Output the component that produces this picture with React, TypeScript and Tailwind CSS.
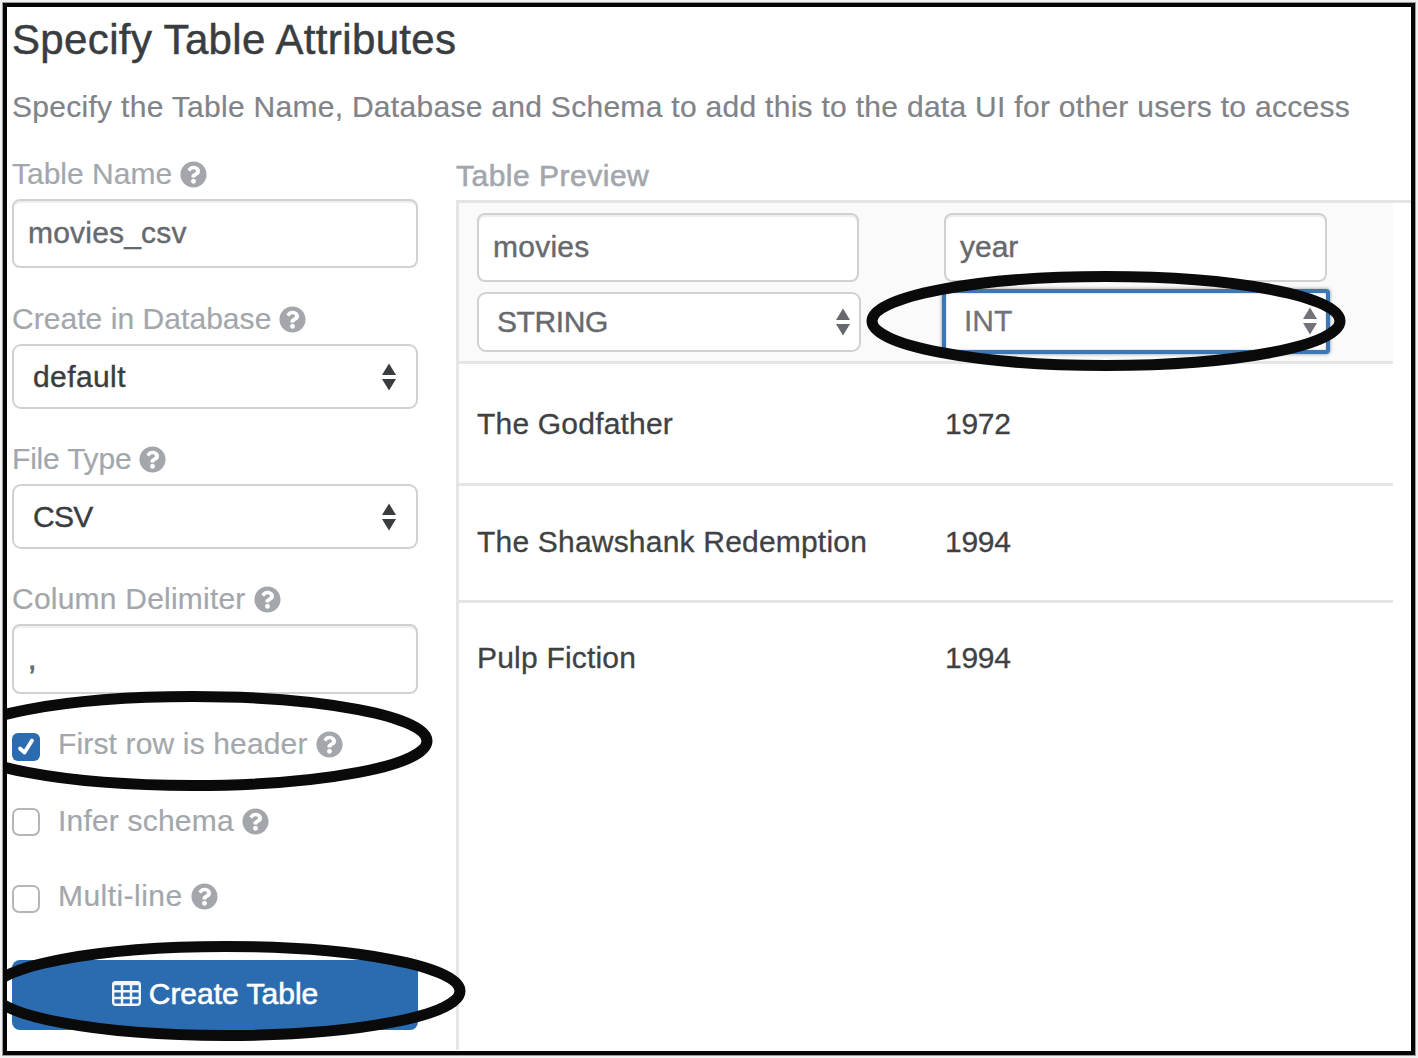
import React from "react";
import { FaQuestionCircle } from "react-icons/fa";

function Help() {
  return <FaQuestionCircle className="size-[27px] shrink-0 text-[#a3a7ac]" />;
}

function Label({ text, className = "" }: { text: string; className?: string }) {
  return (
    <div className={"flex items-center gap-[8px] whitespace-nowrap text-[30px] leading-[30px] text-[#a3a7ac] [-webkit-text-stroke:0.2px_#a3a7ac] " + className}>
      <span>{text}</span>
      <Help />
    </div>
  );
}

function Sorter() {
  return (
    <svg viewBox="0 0 14 28" className="h-[28px] w-[14px]" fill="currentColor">
      <path d="M7 0.5 L14 12 H0 Z M0 16 H14 L7 27.5 Z" />
    </svg>
  );
}

function Field({ value, className = "" }: { value: string; className?: string }) {
  return (
    <div className={"flex items-center rounded-[8px] border-2 border-[#cfd1d4] bg-white pl-[14px] text-[30px] leading-[30px] shadow-[inset_0_2px_1px_#eeeeef] " + className}>
      <span>{value}</span>
    </div>
  );
}

function Picker({ value, className = "" }: { value: string; className?: string }) {
  return (
    <div className={"flex items-center justify-between rounded-[9px] border-2 border-[#cfd1d4] bg-white text-[30px] leading-[30px] " + className}>
      <span>{value}</span>
      <Sorter />
    </div>
  );
}

function Check({ label, checked = false, className = "", labelClass = "" }: { label: string; checked?: boolean; className?: string; labelClass?: string }) {
  return (
    <div className={"flex items-start gap-[18px] " + className}>
      {checked ? (
        <div className="flex size-[28px] items-center justify-center rounded-[6px] bg-[#2b6cb0]">
          <svg viewBox="0 0 28 28" className="size-[28px]" fill="none" stroke="white" strokeWidth="3.8" strokeLinecap="round" strokeLinejoin="round">
            <path d="M8 15.5 L12.5 19.5 L20 7.5" />
          </svg>
        </div>
      ) : (
        <div className="size-[28px] rounded-[7px] border-2 border-[#b4b6b9] bg-white" />
      )}
      <Label text={label} className={labelClass} />
    </div>
  );
}

function Ring({ className }: { className: string }) {
  return (
    <svg viewBox="0 0 480 102" className={"pointer-events-none absolute h-[102px] w-[480px] " + className} fill="none" stroke="#0a0a0a" strokeWidth="11">
      <ellipse cx="240" cy="51" rx="234" ry="44.5" />
    </svg>
  );
}

function Row({ title, year, className = "" }: { title: string; year: string; className?: string }) {
  return (
    <div className={"flex w-[934px] items-center pl-[18px] text-[30px] leading-[30px] text-[#3f4245] [-webkit-text-stroke:0.3px_#3f4245] " + className}>
      <span className="w-[468px] tracking-[0.2px]">{title}</span>
      <span className="tracking-[-0.3px]">{year}</span>
    </div>
  );
}

export default function App() {
  return (
    <main className="h-[1058px] w-[1418px] overflow-hidden bg-[#f1f1f1] p-[3px] font-['Liberation_Sans',Arial,sans-serif]">
      <div className="relative h-[1052px] w-[1412px] overflow-hidden border-4 border-[#050505] bg-white outline-1 outline-[#9a9a9a]">
        <h1 className="mt-[12px] ml-[5px] text-[42px] leading-[42px] tracking-[0.36px] whitespace-nowrap text-[#3a3d40] [-webkit-text-stroke:0.5px_#3a3d40]">
          Specify Table Attributes
        </h1>
        <p className="mt-[31px] ml-[5px] text-[30px] leading-[30px] tracking-[0.29px] whitespace-nowrap text-[#808388] [-webkit-text-stroke:0.2px_#808388]">
          Specify the Table Name, Database and Schema to add this to the data UI for other users to access
        </p>

        <div className="flex pl-[5px]">
          <section className="mt-[37px] flex w-[406px] shrink-0 flex-col">
            <Label text="Table Name" />
            <Field value="movies_csv" className="mt-[10px] h-[69px] pb-[2px] tracking-[0.2px] text-[#66696d] [-webkit-text-stroke:0.4px_#66696d]" />
            <Label text="Create in Database" className="mt-[36px] tracking-[0.05px]" />
            <Picker value="default" className="mt-[10px] h-[65px] pr-[20px] pl-[19px] tracking-[0.4px] text-[#3a3d40] [-webkit-text-stroke:0.4px_#3a3d40]" />
            <Label text="File Type" className="mt-[35px] tracking-[-0.2px]" />
            <Picker value="CSV" className="mt-[10px] h-[65px] pr-[20px] pl-[19px] tracking-[-0.7px] text-[#3a3d40] [-webkit-text-stroke:0.4px_#3a3d40]" />
            <Label text="Column Delimiter" className="mt-[35px] tracking-[0.22px]" />
            <Field value="," className="mt-[10px] h-[70px] text-[#66696d] [-webkit-text-stroke:0.8px_#66696d]" />
            <Check label="First row is header" checked className="mt-[39px] h-[30px]" labelClass="mt-[-4px] tracking-[0.15px]" />
            <Check label="Infer schema" className="mt-[45px] h-[30px]" labelClass="mt-[-2px] tracking-[0.2px]" />
            <Check label="Multi-line" className="mt-[47px] h-[30px]" labelClass="mt-[-4px] tracking-[0.45px]" />
            <button className="mt-[45px] flex h-[70px] w-[406px] items-center justify-center gap-[8px] rounded-[8px] bg-[#2b6cb0] pb-[3px] text-[30px] leading-[30px] whitespace-nowrap text-white [-webkit-text-stroke:0.6px_white]">
              <svg viewBox="0 0 29 25" className="h-[25px] w-[29px]" fill="none" stroke="#f3f6fa" strokeWidth="2.4">
                <rect x="1.2" y="1.2" width="26.6" height="22.6" rx="2.5" />
                <path d="M1 3 H28 M1 10.3 H28 M1 17 H28 M10 3 V24 M19 3 V24" />
              </svg>
              <span>Create Table</span>
            </button>
          </section>

          <section className="mt-[39px] ml-[38px] w-[956px] shrink-0">
            <h2 className="text-[30px] leading-[30px] tracking-[0.5px] whitespace-nowrap text-[#a3a7ac] [-webkit-text-stroke:0.6px_#a3a7ac]">
              Table Preview
            </h2>
            <div className="mt-[9px] h-[850px] border-t-[3px] border-l-[3px] border-[#e5e5e6]">
              <div className="flex h-[161px] w-[934px] items-start border-b-[3px] border-[#e5e5e6] bg-[#fafafa] pt-[10px] pl-[18px]">
                <div className="w-[467px]">
                  <Field value="movies" className="h-[69px] w-[382px] pb-[2px] tracking-[0.25px] text-[#66696d] [-webkit-text-stroke:0.4px_#66696d]" />
                  <Picker value="STRING" className="mt-[10px] h-[60px] w-[384px] pr-[9px] pb-[1px] pl-[18px] tracking-[-0.4px] text-[#66696d] [-webkit-text-stroke:0.4px_#66696d]" />
                </div>
                <div>
                  <Field value="year" className="h-[69px] w-[383px] pb-[2px] text-[#66696d] [-webkit-text-stroke:0.4px_#66696d]" />
                  <div className="mt-[7px] ml-[-2px] flex h-[65px] w-[388px] items-center justify-between rounded-[4px] border-4 border-[#3b76b5] bg-white pr-[9px] pb-[2px] pl-[18px] text-[30px] leading-[30px] text-[#707377] shadow-[0_0_3px_1px_#b5b9bf,inset_0_0_2px_#a9adb3] [-webkit-text-stroke:0.3px_#707377]">
                    <span>INT</span>
                    <Sorter />
                  </div>
                </div>
              </div>
              <Row title="The Godfather" year="1972" className="h-[122px] border-b-[3px] border-[#e5e5e6]" />
              <Row title="The Shawshank Redemption" year="1994" className="h-[117px] border-b-[3px] border-[#e5e5e6] pb-[3px]" />
              <Row title="Pulp Fiction" year="1994" className="h-[110px]" />
            </div>
          </section>
        </div>

        <Ring className="top-[683px] left-[-54px]" />
        <Ring className="top-[933px] left-[-21px]" />
        <Ring className="top-[263px] left-[859px]" />
      </div>
    </main>
  );
}
